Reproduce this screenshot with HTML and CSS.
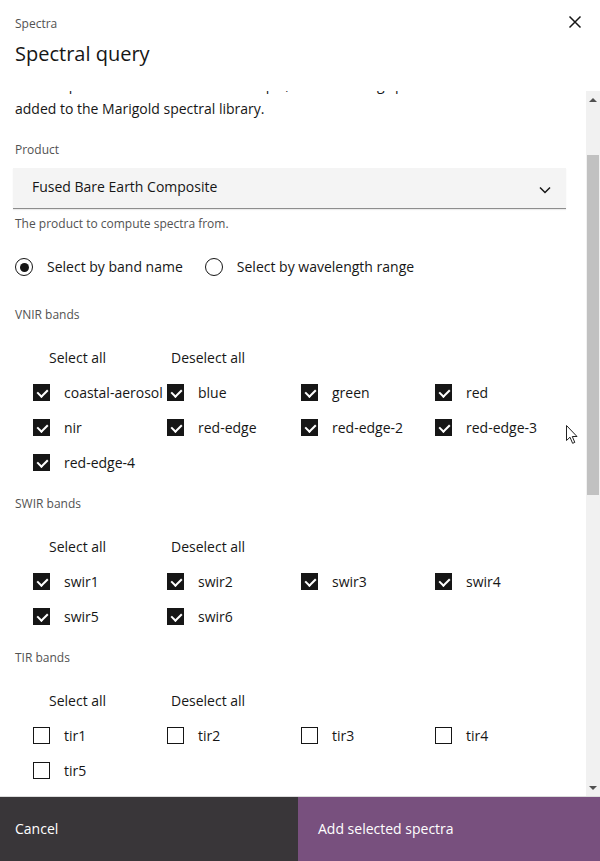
FILE: index.html
```html
<!DOCTYPE html>
<html lang="en">
<head>
<meta charset="utf-8">
<title>Spectral query</title>
<link rel="stylesheet" href="styles.css">
</head>
<body>
<div class="modal">
  <header class="modal-header">
    <div class="titles">
      <p class="modal-label">Spectra</p>
      <h2 class="modal-title">Spectral query</h2>
    </div>
    <button class="close" aria-label="Close">
      <svg width="14" height="14" viewBox="0 0 14 14"><path d="M1.5 1.5 L12.5 12.5 M12.5 1.5 L1.5 12.5" stroke="#161616" stroke-width="1.5" fill="none"/></svg>
    </button>
  </header>

  <div class="modal-body">
    <div class="viewport">
      <div class="content">
        <p class="intro">Select a product and the bands to sample; each resulting spectrum will be<br>added to the Marigold spectral library.</p>

        <label class="field-label">Product</label>
        <div class="select">
          <span class="select-value">Fused Bare Earth Composite</span>
          <svg class="chevron" width="12" height="8" viewBox="0 0 12 8"><path d="M1 1.5 L6 6.5 L11 1.5" stroke="#161616" stroke-width="1.5" fill="none"/></svg>
        </div>
        <p class="helper">The product to compute spectra from.</p>

        <div class="radios">
          <label class="radio"><span class="radio-dot checked"></span>Select by band name</label>
          <label class="radio"><span class="radio-dot"></span>Select by wavelength range</label>
        </div>

        <section class="group first">
          <p class="group-label">VNIR bands</p>
          <div class="actions">
            <button class="ghost a1">Select all</button>
            <button class="ghost a2">Deselect all</button>
          </div>
          <div class="bands">
            <label class="cb"><span class="box on"></span>coastal-aerosol</label>
            <label class="cb"><span class="box on"></span>blue</label>
            <label class="cb"><span class="box on"></span>green</label>
            <label class="cb"><span class="box on"></span>red</label>
            <label class="cb"><span class="box on"></span>nir</label>
            <label class="cb"><span class="box on"></span>red-edge</label>
            <label class="cb"><span class="box on"></span>red-edge-2</label>
            <label class="cb"><span class="box on"></span>red-edge-3</label>
            <label class="cb"><span class="box on"></span>red-edge-4</label>
          </div>
        </section>

        <section class="group">
          <p class="group-label">SWIR bands</p>
          <div class="actions">
            <button class="ghost a1">Select all</button>
            <button class="ghost a2">Deselect all</button>
          </div>
          <div class="bands">
            <label class="cb"><span class="box on"></span>swir1</label>
            <label class="cb"><span class="box on"></span>swir2</label>
            <label class="cb"><span class="box on"></span>swir3</label>
            <label class="cb"><span class="box on"></span>swir4</label>
            <label class="cb"><span class="box on"></span>swir5</label>
            <label class="cb"><span class="box on"></span>swir6</label>
          </div>
        </section>

        <section class="group">
          <p class="group-label">TIR bands</p>
          <div class="actions">
            <button class="ghost a1">Select all</button>
            <button class="ghost a2">Deselect all</button>
          </div>
          <div class="bands">
            <label class="cb"><span class="box"></span>tir1</label>
            <label class="cb"><span class="box"></span>tir2</label>
            <label class="cb"><span class="box"></span>tir3</label>
            <label class="cb"><span class="box"></span>tir4</label>
            <label class="cb"><span class="box"></span>tir5</label>
          </div>
        </section>
      </div>
    </div>
    <div class="scrollbar">
      <div class="sb-btn"><span class="tri up"></span></div>
      <div class="sb-track"><div class="sb-thumb"></div></div>
      <div class="sb-btn"><span class="tri down"></span></div>
    </div>
  </div>

  <footer class="modal-footer">
    <button class="btn secondary">Cancel</button>
    <button class="btn primary">Add selected spectra</button>
  </footer>

  <svg class="cursor" width="13" height="20" viewBox="0 0 13 20"><path d="M0.5 0.5 L0.5 15.5 L4 12.2 L6.6 18.3 L8.8 17.4 L6.3 11.5 L11 11.5 Z" fill="#fff" stroke="#222" stroke-width="1" stroke-linejoin="round"/></svg>
</div>
</body>
</html>
```

FILE: styles.css
```css
* { box-sizing: border-box; }

html, body {
  margin: 0;
  padding: 0;
  background: #fff;
}

body {
  font-family: "Open Sans", "Noto Sans", "Liberation Sans", sans-serif;
  color: #161616;
}

.modal {
  position: relative;
  width: 600px;
  height: 861px;
  display: flex;
  flex-direction: column;
  background: #fff;
  overflow: hidden;
}

/* header */
.modal-header {
  height: 91px;
  flex: none;
  display: flex;
  justify-content: space-between;
  align-items: flex-start;
  padding: 16px 13px 0 15px;
}

.modal-label {
  margin: 0;
  font-size: 12px;
  line-height: 16px;
  color: #525252;
}

.modal-title {
  margin: 8px 0 0;
  font-size: 20px;
  line-height: 28px;
  font-weight: 400;
  color: #161616;
}

.close {
  width: 24px;
  height: 24px;
  margin-top: -6px;
  padding: 0;
  border: 0;
  background: transparent;
  display: flex;
  align-items: center;
  justify-content: center;
}

/* body */
.modal-body {
  flex: 1;
  display: flex;
  min-height: 0;
  border-bottom: 1px solid #dcdcdc;
}

.viewport {
  flex: 1;
  overflow: hidden;
}

.content {
  margin-top: -18px;
  padding: 0 20px 0 15px;
  font-size: 14px;
}

.intro {
  margin: 0;
  line-height: 24px;
  font-size: 14px;
  color: #161616;
}

.field-label {
  display: block;
  margin-top: 21px;
  font-size: 12px;
  line-height: 16px;
  color: #525252;
}

.select {
  margin: 10px 0 0 -2px;
  height: 41px;
  background: #f4f4f4;
  border-bottom: 1px solid #8d8d8d;
  box-shadow: 0 1px 1px rgba(0,0,0,0.08);
  display: flex;
  align-items: center;
  justify-content: space-between;
  padding: 0 15px 0 19px;
}

.select-value {
  font-size: 14px;
  line-height: 20px;
  margin-top: -2px;
}

.chevron { margin-top: 4px; }

.helper {
  margin: 7px 0 0;
  font-size: 12px;
  line-height: 16px;
  color: #525252;
}

.radios {
  margin-top: 23px;
  height: 24px;
  display: flex;
  align-items: center;
  gap: 22px;
}

.radio {
  display: flex;
  align-items: center;
  gap: 14px;
  font-size: 14px;
  line-height: 20px;
}

.radio-dot {
  width: 18px;
  height: 18px;
  border: 1.5px solid #161616;
  border-radius: 50%;
  display: flex;
  align-items: center;
  justify-content: center;
}

.radio-dot.checked::after {
  content: "";
  width: 9px;
  height: 9px;
  border-radius: 50%;
  background: #161616;
}

/* groups */
.group { margin-top: 16px; }
.group.first { margin-top: 28px; }

.group-label {
  margin: 0;
  font-size: 12px;
  line-height: 16px;
  color: #525252;
}

.actions {
  margin: 18px 0 0 18px;
  height: 34px;
  display: grid;
  grid-template-columns: 134px 134px;
  align-items: center;
}

.ghost {
  justify-self: start;
  border: 0;
  background: transparent;
  font-family: inherit;
  font-size: 14px;
  line-height: 20px;
  color: #161616;
  padding: 0;
}

.ghost.a1 { padding-left: 16px; }
.ghost.a2 { padding-left: 4px; }

.bands {
  margin-left: 18px;
  display: grid;
  grid-template-columns: repeat(4, 134px);
  grid-auto-rows: 35px;
}

.cb {
  display: flex;
  align-items: center;
  gap: 14px;
  font-size: 14px;
  line-height: 20px;
  white-space: nowrap;
}

.box {
  flex: none;
  width: 17px;
  height: 17px;
  border: 1.5px solid #161616;
  background: #fff;
  position: relative;
}

.box.on {
  background: #161616;
}

.box.on::after {
  content: "";
  position: absolute;
  left: 5px;
  top: 1.5px;
  width: 5px;
  height: 8px;
  border-right: 2px solid #fff;
  border-bottom: 2px solid #fff;
  transform: rotate(45deg);
  transform-origin: center;
}

/* fake scrollbar */
.scrollbar {
  width: 14px;
  flex: none;
  background: #f1f1f1;
  display: flex;
  flex-direction: column;
}

.sb-btn {
  height: 17px;
  display: flex;
  align-items: center;
  justify-content: center;
}

.tri {
  width: 0;
  height: 0;
  border-left: 4px solid transparent;
  border-right: 4px solid transparent;
}

.tri.up { border-bottom: 4px solid #505050; }
.tri.down { border-top: 4px solid #505050; }

.sb-track {
  flex: 1;
  padding: 0 1px;
}

.sb-thumb {
  margin-top: 47px;
  height: 340px;
  background: #c1c1c1;
}

/* footer */
.modal-footer {
  height: 64px;
  flex: none;
  display: flex;
}

.btn {
  border: 0;
  margin: 0;
  font-family: inherit;
  font-size: 14px;
  line-height: 20px;
  color: #fff;
  text-align: left;
  display: flex;
  align-items: center;
}

.btn.secondary {
  width: 298px;
  background: #393639;
  padding: 0 15px;
}

.btn.primary {
  flex: 1;
  background: #78507e;
  padding: 0 20px;
}

.cursor {
  position: absolute;
  left: 566px;
  top: 425px;
}
```
